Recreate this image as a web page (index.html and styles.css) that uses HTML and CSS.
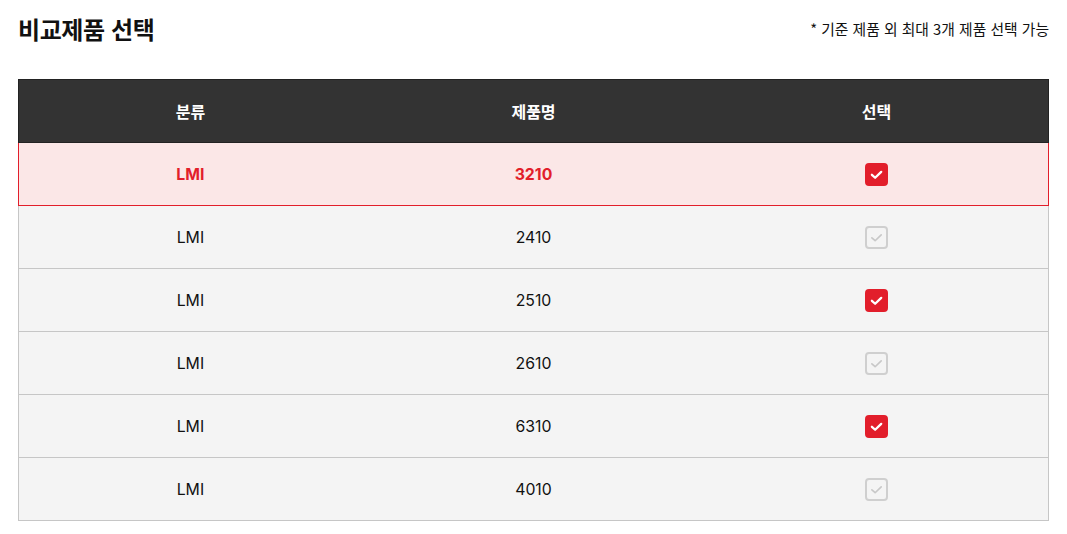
FILE: index.html
```html
<!DOCTYPE html>
<html lang="ko">
<head>
<meta charset="utf-8">
<link rel="stylesheet" href="styles.css">
</head>
<body>
<div class="page">
  <div class="head">
    <h2 class="title">비교제품 선택</h2>
    <p class="note">* 기준 제품 외 최대 3개 제품 선택 가능</p>
  </div>
  <table class="cmp">
    <thead>
      <tr><th>분류</th><th>제품명</th><th>선택</th></tr>
    </thead>
    <tbody>
      <tr class="base"><td>LMI</td><td>3210</td><td><span class="chk on"><svg viewBox="0 0 22 22"><path d="M6.6 11.3l3.1 2.8 5.8-5.6" /></svg></span></td></tr>
      <tr><td>LMI</td><td>2410</td><td><span class="chk"><svg viewBox="0 0 22 22"><path d="M6.6 11.3l3.1 2.8 5.8-5.6" /></svg></span></td></tr>
      <tr><td>LMI</td><td>2510</td><td><span class="chk on"><svg viewBox="0 0 22 22"><path d="M6.6 11.3l3.1 2.8 5.8-5.6" /></svg></span></td></tr>
      <tr><td>LMI</td><td>2610</td><td><span class="chk"><svg viewBox="0 0 22 22"><path d="M6.6 11.3l3.1 2.8 5.8-5.6" /></svg></span></td></tr>
      <tr><td>LMI</td><td>6310</td><td><span class="chk on"><svg viewBox="0 0 22 22"><path d="M6.6 11.3l3.1 2.8 5.8-5.6" /></svg></span></td></tr>
      <tr><td>LMI</td><td>4010</td><td><span class="chk"><svg viewBox="0 0 22 22"><path d="M6.6 11.3l3.1 2.8 5.8-5.6" /></svg></span></td></tr>
    </tbody>
  </table>
</div>
</body>
</html>
```
FILE: styles.css
```css
* { box-sizing: border-box; }
html, body { margin: 0; padding: 0; background: #fff; }
body {
  font-family: "Inter", "Noto Sans CJK KR", sans-serif;
  color: #111;
}
.page { padding: 12px 18px 0 18px; }
.head {
  display: flex;
  justify-content: space-between;
  align-items: center;
  height: 32px;
}
.title {
  margin: 0;
  font-family: "Noto Sans CJK KR", sans-serif;
  font-size: 24px;
  font-weight: 700;
  letter-spacing: -0.4px;
  color: #111;
}
.note {
  margin: 0;
  font-family: "Noto Sans CJK KR", sans-serif;
  font-size: 14.8px;
  color: #111;
}
.cmp {
  margin-top: 35px;
  width: 100%;
  border-collapse: collapse;
  table-layout: fixed;
}
.cmp th {
  background: #333333;
  color: #fff;
  height: 63px;
  font-family: "Noto Sans CJK KR", sans-serif;
  font-size: 16px;
  font-weight: 700;
  border: 1px solid #222;
  border-left: none;
  border-right: none;
  padding: 0;
}
.cmp thead tr th:first-child { border-left: 1px solid #222; }
.cmp thead tr th:last-child { border-right: 1px solid #222; }
.cmp td {
  height: 63px;
  text-align: center;
  font-size: 15.8px;
  background: #f4f4f4;
  border-bottom: 1px solid #c6c6c6;
  padding: 0;
  vertical-align: middle;
}
.cmp td:first-child { border-left: 1px solid #c6c6c6; }
.cmp td:last-child { border-right: 1px solid #c6c6c6; }
.cmp tr.base td {
  background: #fbe7e7;
  color: #e21e2b;
  font-weight: 700;
  border-top: 1px solid #e21e2b;
  border-bottom: 1px solid #e21e2b;
}
.cmp tr.base td:first-child { border-left: 1px solid #e21e2b; }
.cmp tr.base td:last-child { border-right: 1px solid #e21e2b; }
.chk {
  display: inline-block;
  width: 23px;
  height: 23px;
  border-radius: 4px;
  border: 2px solid #cfcfcf;
  background: #f4f4f4;
  vertical-align: middle;
  position: relative;
}
.chk svg {
  position: absolute;
  left: -2px;
  top: -2px;
  width: 23px;
  height: 23px;
}
.chk path {
  fill: none;
  stroke: #c8c8c8;
  stroke-width: 1.6;
  stroke-linecap: round;
  stroke-linejoin: round;
}
.chk.on {
  background: #e21e2b;
  border-color: #e21e2b;
}
.chk.on path { stroke: #fff; stroke-width: 2.2; }
```
